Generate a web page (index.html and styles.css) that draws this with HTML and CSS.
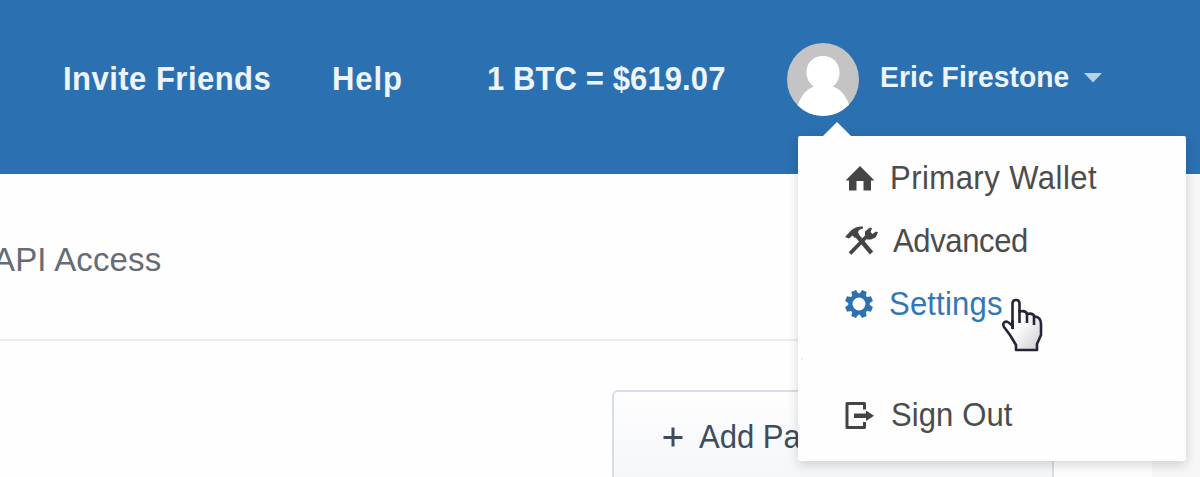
FILE: index.html
```html
<!DOCTYPE html>
<html lang="en">
<head>
<meta charset="utf-8">
<title>Wallet</title>
<link rel="stylesheet" href="styles.css">
</head>
<body>
<header class="topbar">
  <nav class="nav">
    <a class="nav-link invite">Invite Friends</a>
    <a class="nav-link help">Help</a>
    <span class="nav-link rate">1 BTC = $619.07</span>
  </nav>
  <div class="account">
    <svg class="avatar" viewBox="0 0 72 73">
      <clipPath id="round"><ellipse cx="36" cy="36.5" rx="36" ry="36.5"/></clipPath>
      <g clip-path="url(#round)">
        <rect width="72" height="73" fill="#c4c4c4"/>
        <path fill="#fff" d="M36 13C26 13 19.500 20 19.500 29C19.500 36 22 40 27 43.500C19 46 14 53 10 64V73H63V64C59 53 54 46 46 43.500C50 40 52.500 36 52.500 29C52.500 20 46 13 36 13Z"/>
      </g>
    </svg>
    <span class="name">Eric Firestone</span>
    <svg class="caret" viewBox="0 0 20 11"><path fill="#b9d0e6" d="M0 0H20L10 10.500Z"/></svg>
  </div>
</header>
<main class="page">
  <section class="content">
    <div class="tabs"><a class="tab">API Access</a></div>
    <div class="actions">
      <div class="button"><svg class="plus" viewBox="0 0 20 20"><path d="M10 .5V19.500M.5 10.500H19.500" stroke="#3d4d5f" stroke-width="3"/></svg><span class="button-label">Add Payment</span></div>
    </div>
  </section>
  <aside class="gutter"></aside>
</main>
<div class="menu">
  <svg class="arrow" viewBox="0 0 30 15"><path fill="#fff" d="M0 15L15 0L30 15Z"/></svg>
  <a class="item">
    <svg class="icon" viewBox="0 0 34 34"><path fill="#444" d="M15 5L.5 19.500H4V29.500H11.500V20H18.500V29.500H26V19.500H29.500Z"/></svg>
    <span class="label primary">Primary Wallet</span>
  </a>
  <a class="item">
    <svg class="icon" viewBox="0 0 34 34">
      <path fill="#444" d="M0 13L6 6.500Q11 2 18 2.500V4.500Q14 5 13 8L14 11L10 14L7.500 11.500L4 14.500Z"/>
      <path d="M11 10.500L26.500 29" stroke="#444" stroke-width="4.300"/>
      <path d="M5 29.500L24 10" stroke="#444" stroke-width="3.800"/>
      <path fill="#444" d="M20 12.500V7.500L25 3.500L27 4.500L25.500 8L27.500 10L31 7.500L33 8.500L30.500 13.500L26 15.500H22Z"/>
    </svg>
    <span class="label advanced">Advanced</span>
  </a>
  <a class="item active">
    <svg class="icon" viewBox="0 0 34 34">
      <circle cx="14" cy="17" r="8.600" fill="none" stroke="#2c72b2" stroke-width="4.200"/>
      <g fill="#2c72b2"><path id="tooth" d="M10.500 8L11.500 3H16.500L17.500 8Z" transform="rotate(22.500 14 17)"/><use href="#tooth" transform="rotate(45 14 17)"/><use href="#tooth" transform="rotate(90 14 17)"/><use href="#tooth" transform="rotate(135 14 17)"/><use href="#tooth" transform="rotate(180 14 17)"/><use href="#tooth" transform="rotate(225 14 17)"/><use href="#tooth" transform="rotate(270 14 17)"/><use href="#tooth" transform="rotate(315 14 17)"/></g>
    </svg>
    <span class="label settings">Settings</span>
  </a>
  <div class="divider"></div>
  <a class="item">
    <svg class="icon" viewBox="0 0 34 34"><path d="M19.500 11.500V5.500H2V29.500H19.500V24" fill="none" stroke="#444" stroke-width="3" stroke-linejoin="round"/><path fill="#444" d="M9 15.500H21V12.500L29 17.700L21 23V20H9Z"/></svg>
    <span class="label sign">Sign Out</span>
  </a>
</div>
<svg class="cursor" viewBox="0 0 44 56">
  <defs><linearGradient id="hand" x1="0" y1="0" x2="1" y2="1"><stop offset=".45" stop-color="#fff"/><stop offset="1" stop-color="#ccc"/></linearGradient></defs>
  <path d="M11.500 31V6.500Q11.500 3 15 3Q18.500 3 18.500 6.500V14.500Q25 13 26 17Q32 15.500 33.500 19.500Q40 20 40 27V38L36 47V53H15V48L9 38L3 30Q1 25.500 5 24.500Q7 24.500 11.500 29Z" fill="url(#hand)" stroke="#25253a" stroke-width="2.600" stroke-linejoin="round"/>
  <path d="M11.500 23V32M18.500 13V26M26 16V26M33 19V28" fill="none" stroke="#25253a" stroke-width="2.600"/>
</svg>
</body>
</html>
```
FILE: styles.css
```css
* { box-sizing: border-box; }
body {
  margin: 0;
  height: 477px;
  overflow: hidden;
  position: relative;
  display: flex;
  flex-direction: column;
  background: #fefefe;
  font: 33px "Liberation Sans", Arial, sans-serif;
  white-space: nowrap;
}
.topbar {
  flex: none;
  height: 174px;
  padding: 0 0 17px 63px;
  display: flex;
  align-items: center;
  background: #2b70b1;
  color: #edf4fa;
  font-weight: bold;
}
.nav { display: flex; }
.nav-link, .name, .label, .button-label {
  transform: scaleX(0.94);
  transform-origin: left center;
}
.invite { width: 269px; letter-spacing: 0.5px; }
.help { width: 155px; letter-spacing: 1px; }
.rate { width: 300px; letter-spacing: 0.1px; }
.account { display: flex; align-items: center; }
.avatar { width: 72px; height: 73px; margin-top: 2px; }
.name { width: 205px; margin: -3px 0 0 21px; font-size: 30px; letter-spacing: 0.1px; }
.caret { width: 18px; height: 10px; margin: -2px 0 0 -1px; }
.page { flex: 1; display: flex; min-height: 0; }
.content { width: 1152px; }
.tabs {
  height: 167px;
  padding-top: 67px;
  border-bottom: 2px solid #ececec;
  color: #666b75;
}
.tab { margin-left: -7px; letter-spacing: 0.15px; }
.actions { padding: 49px 0 0 612px; }
.button {
  width: 442px;
  height: 94px;
  padding-left: 49px;
  display: flex;
  align-items: center;
  border: 2px solid #d6dfe8;
  border-radius: 6px;
  background: linear-gradient(#fefefe, #f4f6f9);
  color: #3d4d5f;
}
.plus { width: 20px; height: 20px; margin-right: 16px; }
.button-label { letter-spacing: 0; }
.gutter { flex: 1; background: #f7f7f7; }
.menu {
  position: absolute;
  left: 798px;
  top: 136px;
  width: 388px;
  height: 325px;
  padding: 10px 0 0 47px;
  background: #fefefe;
  border-radius: 2px;
  box-shadow: 0 4px 12px rgba(0, 0, 0, 0.16);
  color: #4c4c4c;
}
.arrow { position: absolute; left: 24px; top: -14px; width: 30px; height: 15px; }
.item { display: flex; align-items: center; height: 63px; }
.icon { width: 34px; height: 34px; margin-right: 9px; }
.primary { margin-left: 2px; letter-spacing: 0.5px; }
.advanced { margin-left: 5px; letter-spacing: -0.4px; }
.active { color: #3277b7; }
.divider { width: 2px; height: 2px; margin: 23px 0 23px -44px; background: #eee; }
.settings { margin-left: 1px; letter-spacing: 0.2px; }
.sign { margin-left: 3px; letter-spacing: 0.1px; }
.cursor { position: absolute; left: 1001px; top: 297px; width: 44px; height: 56px; }
```
